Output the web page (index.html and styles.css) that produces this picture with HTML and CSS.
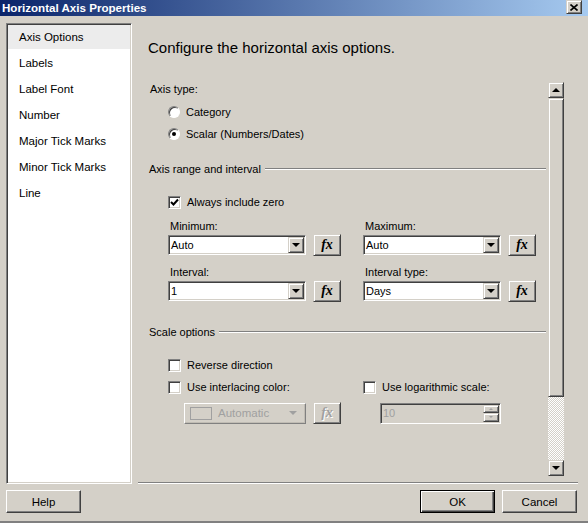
FILE: index.html
```html
<!DOCTYPE html>
<html lang="en">

<head>
  <meta charset="utf-8">
  <title>Horizontal Axis Properties</title>
  <link rel="stylesheet" href="styles.css">
</head>

<body>
  <div class="window">
    <div class="titlebar">
      <span class="title">Horizontal Axis Properties</span>
      <div class="close-btn">
        <svg width="8" height="7" viewBox="0 0 8 7"><path d="M0.5 0.5 L7.5 6.5 M7.5 0.5 L0.5 6.5" stroke="#000" stroke-width="1.6"/></svg>
      </div>
    </div>

    <div class="dialog">
      <ul class="nav">
        <li class="nav-item active">Axis Options</li>
        <li class="nav-item">Labels</li>
        <li class="nav-item">Label Font</li>
        <li class="nav-item">Number</li>
        <li class="nav-item">Major Tick Marks</li>
        <li class="nav-item">Minor Tick Marks</li>
        <li class="nav-item">Line</li>
      </ul>

      <div class="page">
        <h1 class="page-title">Configure the horizontal axis options.</h1>

        <div class="scroll-area">
          <div class="form">
            <div class="label">Axis type:</div>
            <div class="option first"><span class="radio"></span>Category</div>
            <div class="option"><span class="radio checked"></span>Scalar (Numbers/Dates)</div>

            <div class="group-title">Axis range and interval</div>
            <div class="option after-title">
              <span class="checkbox">
                <svg width="9" height="9" viewBox="0 0 9 9"><path d="M1 4 L3.5 6.5 L8 1.5" fill="none" stroke="#000" stroke-width="2"/></svg>
              </span>Always include zero
            </div>

            <div class="field-grid">
              <div class="field">
                <div class="field-label">Minimum:</div>
                <div class="field-row">
                  <div class="combo"><span class="combo-value">Auto</span><span class="combo-btn"><span class="arrow-down"></span></span></div>
                  <div class="fx-btn">fx</div>
                </div>
              </div>
              <div class="field">
                <div class="field-label">Maximum:</div>
                <div class="field-row">
                  <div class="combo"><span class="combo-value">Auto</span><span class="combo-btn"><span class="arrow-down"></span></span></div>
                  <div class="fx-btn">fx</div>
                </div>
              </div>
              <div class="field spaced">
                <div class="field-label">Interval:</div>
                <div class="field-row">
                  <div class="combo"><span class="combo-value">1</span><span class="combo-btn"><span class="arrow-down"></span></span></div>
                  <div class="fx-btn">fx</div>
                </div>
              </div>
              <div class="field spaced">
                <div class="field-label">Interval type:</div>
                <div class="field-row">
                  <div class="combo"><span class="combo-value">Days</span><span class="combo-btn"><span class="arrow-down"></span></span></div>
                  <div class="fx-btn">fx</div>
                </div>
              </div>
            </div>

            <div class="group-title second">Scale options</div>
            <div class="option after-title"><span class="checkbox"></span>Reverse direction</div>

            <div class="scale-grid">
              <div class="field">
                <div class="option plain"><span class="checkbox"></span>Use interlacing color:</div>
                <div class="field-row disabled-row">
                  <div class="color-picker">
                    <span class="swatch"></span>
                    <span>Automatic</span>
                    <span class="arrow-down grey"></span>
                  </div>
                  <div class="fx-btn disabled">fx</div>
                </div>
              </div>
              <div class="field">
                <div class="option plain"><span class="checkbox"></span>Use logarithmic scale:</div>
                <div class="field-row disabled-row">
                  <div class="spin">
                    <span class="spin-value">10</span>
                    <span class="spin-btns">
                      <span class="spin-btn"><span class="arrow-up tiny"></span></span>
                      <span class="spin-btn"><span class="arrow-down tiny"></span></span>
                    </span>
                  </div>
                </div>
              </div>
            </div>
          </div>

          <div class="scrollbar">
            <div class="sb-btn"><span class="arrow-up"></span></div>
            <div class="sb-thumb"></div>
            <div class="sb-track"></div>
            <div class="sb-btn"><span class="arrow-down"></span></div>
          </div>
        </div>
      </div>
    </div>

    <div class="footer">
      <div class="btn">Help</div>
      <div class="footer-right">
        <div class="btn btn-default">OK</div>
        <div class="btn">Cancel</div>
      </div>
    </div>
  </div>
</body>

</html>
```

FILE: styles.css
```css
body {
  margin: 0;
  background-color: #d4d0c8;
  font-family: "Liberation Sans", Arial, sans-serif;
  font-size: 11px;
  color: #000000;
}

.window {
  width: 588px;
  height: 521px;
  display: flex;
  flex-direction: column;
  overflow: hidden;
  border-bottom: 2px solid #808080;
}

/* title bar */
.titlebar {
  flex: none;
  height: 16px;
  display: flex;
  align-items: flex-start;
  justify-content: space-between;
  padding: 0 6px 0 2px;
  background: linear-gradient(to right, #0a246a, #a6caf0);
}

.title {
  color: #ffffff;
  font-weight: bold;
  font-size: 11.6px;
  line-height: 15px;
}

.close-btn {
  width: 16px;
  height: 14px;
  box-sizing: border-box;
  display: flex;
  align-items: center;
  justify-content: center;
  background-color: #d4d0c8;
  border: 1px solid;
  border-color: #d4d0c8 #404040 #404040 #d4d0c8;
  box-shadow: inset 1px 1px #ffffff, inset -1px -1px #808080;
}

/* main area */
.dialog {
  display: flex;
  gap: 6px;
  padding: 7px 10px 0 6px;
}

.nav {
  flex: none;
  list-style: none;
  margin: 0;
  padding: 1px 0 0;
  width: 126px;
  height: 461px;
  box-sizing: border-box;
  background-color: #ffffff;
  border: 1px solid;
  border-color: #808080 #ffffff #ffffff #808080;
  box-shadow: inset 1px 1px #404040, inset -1px -1px #d4d0c8;
}

.nav-item {
  height: 24px;
  line-height: 24px;
  margin: 0 1px 2px;
  padding-left: 11px;
  font-size: 11.5px;
}

.nav-item.active {
  background-color: #ececec;
}

.page {
  flex: none;
  width: 440px;
  height: 460px;
  box-sizing: border-box;
  display: flex;
  flex-direction: column;
  border-bottom: 1px solid #808080;
  box-shadow: 0 1px #ffffff;
}

.page-title {
  margin: 0;
  height: 59px;
  box-sizing: border-box;
  padding: 15px 0 0 10px;
  font-size: 15px;
  font-weight: normal;
  line-height: 20px;
}

.scroll-area {
  display: flex;
  height: 394px;
}

.form {
  flex: 1;
  min-width: 0;
  padding: 0 2px 0 11px;
}

.label {
  line-height: 14px;
  padding-left: 1px;
}

.option {
  height: 22px;
  display: flex;
  align-items: center;
  padding-left: 19px;
}

.option.first {
  margin-top: 5px;
}

.option.after-title {
  margin-top: 15px;
}

.option.plain {
  padding-left: 0;
}

.group-title {
  margin-top: 17px;
  line-height: 14px;
  display: flex;
  align-items: center;
}

.group-title.second {
  margin-top: 23px;
}

.group-title::after {
  content: "";
  flex: 1;
  margin-left: 4px;
  border-top: 1px solid #808080;
  border-bottom: 1px solid #ffffff;
}

.radio {
  width: 12px;
  height: 12px;
  box-sizing: border-box;
  margin-right: 6px;
  border-radius: 50%;
  border: 1px solid;
  border-color: #808080 #ffffff #ffffff #808080;
  box-shadow: inset 1px 1px #404040;
  background-color: #ffffff;
  display: flex;
  align-items: center;
  justify-content: center;
}

.radio.checked::after {
  content: "";
  width: 4px;
  height: 4px;
  border-radius: 50%;
  background-color: #000000;
}

.checkbox {
  width: 13px;
  height: 13px;
  box-sizing: border-box;
  margin-right: 6px;
  border: 1px solid;
  border-color: #808080 #ffffff #ffffff #808080;
  box-shadow: inset 1px 1px #404040, inset -1px -1px #d4d0c8;
  background-color: #ffffff;
  display: flex;
  align-items: center;
  justify-content: center;
}

.field-grid,
.scale-grid {
  display: grid;
  grid-template-columns: 195px 1fr;
  padding-left: 19px;
  margin-top: 6px;
}

.scale-grid {
  margin-top: 0;
}

.field.spaced {
  margin-top: 9px;
}

.field-label {
  line-height: 14px;
  padding-left: 2px;
}

.field-row {
  height: 22px;
  margin-top: 1px;
  display: flex;
  align-items: center;
}

.field-row.disabled-row {
  margin-top: 4px;
}

.combo {
  width: 138px;
  height: 20px;
  box-sizing: border-box;
  display: flex;
  align-items: center;
  justify-content: space-between;
  background-color: #ffffff;
  border: 1px solid;
  border-color: #808080 #ffffff #ffffff #808080;
  box-shadow: inset 1px 1px #404040, inset -1px -1px #d4d0c8;
  padding: 1px;
}

.combo-value {
  padding-left: 1px;
}

.combo-btn,
.sb-btn,
.spin-btn {
  box-sizing: border-box;
  display: flex;
  align-items: center;
  justify-content: center;
  background-color: #d4d0c8;
  border: 1px solid;
  border-color: #d4d0c8 #404040 #404040 #d4d0c8;
  box-shadow: inset 1px 1px #ffffff, inset -1px -1px #808080;
}

.combo-btn {
  width: 16px;
  height: 16px;
}

.arrow-down,
.arrow-up {
  width: 0;
  height: 0;
  border-left: 4px solid transparent;
  border-right: 4px solid transparent;
}

.arrow-down {
  border-top: 4px solid #000000;
}

.arrow-up {
  border-bottom: 4px solid #000000;
}

.arrow-down.grey {
  border-top-color: #a0a0a0;
  margin-left: auto;
}

.arrow-down.tiny,
.arrow-up.tiny {
  border-left-width: 2px;
  border-right-width: 2px;
  border-top-color: #a0a0a0;
  border-bottom-color: #a0a0a0;
}

.arrow-down.tiny {
  border-top-width: 2px;
}

.arrow-up.tiny {
  border-bottom-width: 2px;
}

.fx-btn {
  width: 28px;
  height: 22px;
  box-sizing: border-box;
  margin-left: 7px;
  display: flex;
  align-items: center;
  justify-content: center;
  font-family: "Liberation Serif", "Times New Roman", serif;
  font-weight: bold;
  font-style: italic;
  font-size: 14px;
  background-color: #d4d0c8;
  border: 1px solid;
  border-color: #d4d0c8 #404040 #404040 #d4d0c8;
  box-shadow: inset 1px 1px #ffffff, inset -1px -1px #808080;
}

.fx-btn.disabled {
  color: #a0a0a0;
  text-shadow: 1px 1px #ffffff;
}

.color-picker {
  width: 122px;
  height: 21px;
  box-sizing: border-box;
  margin-left: 16px;
  padding: 0 8px 0 5px;
  display: flex;
  align-items: center;
  color: #a0a0a0;
  font-size: 11.5px;
  border: 1px solid;
  border-color: #ffffff #808080 #808080 #ffffff;
  box-shadow: inset -1px -1px #c0bcb4;
}

.swatch {
  width: 22px;
  height: 13px;
  box-sizing: border-box;
  margin-right: 6px;
  border: 1px solid #a0a0a0;
}

.spin {
  width: 121px;
  height: 21px;
  box-sizing: border-box;
  margin-left: 17px;
  display: flex;
  align-items: stretch;
  justify-content: space-between;
  border: 1px solid;
  border-color: #808080 #ffffff #ffffff #808080;
  box-shadow: inset 1px 1px #404040;
  padding: 1px 1px 1px 2px;
  color: #a0a0a0;
}

.spin-value {
  line-height: 17px;
}

.spin-btns {
  width: 16px;
  display: flex;
  flex-direction: column;
}

.spin-btn {
  flex: 1;
}

/* scrollbar */
.scrollbar {
  flex: none;
  width: 16px;
  margin-right: 14px;
  display: flex;
  flex-direction: column;
}

.sb-btn {
  height: 16px;
}

.sb-thumb {
  height: 299px;
  box-sizing: border-box;
  background-color: #d4d0c8;
  border: 1px solid;
  border-color: #d4d0c8 #404040 #404040 #d4d0c8;
  box-shadow: inset 1px 1px #ffffff, inset -1px -1px #808080;
}

.sb-track {
  flex: 1;
  background-image: repeating-conic-gradient(#ffffff 0 25%, #d4d0c8 0 50%);
  background-size: 2px 2px;
}

/* buttons */
.footer {
  display: flex;
  justify-content: space-between;
  margin-top: 6px;
  padding: 0 11px 0 6px;
}

.footer-right {
  display: flex;
  gap: 7px;
}

.btn {
  width: 75px;
  height: 23px;
  box-sizing: border-box;
  display: flex;
  align-items: center;
  justify-content: center;
  font-size: 11.5px;
  background-color: #d4d0c8;
  border: 1px solid;
  border-color: #ffffff #404040 #404040 #ffffff;
  box-shadow: inset -1px -1px #808080;
}

.btn-default {
  border-color: #000000;
  box-shadow: inset 1px 1px #ffffff, inset -1px -1px #404040, inset -2px -2px #808080;
}
```
